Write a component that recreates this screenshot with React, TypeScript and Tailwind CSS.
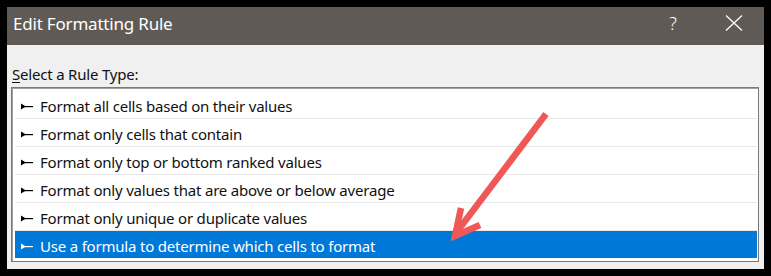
const rules = [
  "Format all cells based on their values",
  "Format only cells that contain",
  "Format only top or bottom ranked values",
  "Format only values that are above or below average",
  "Format only unique or duplicate values",
  "Use a formula to determine which cells to format",
];

const Bullet = ({ color }: { color: string }) => (
  <svg width="12" height="7" viewBox="0 0 12 7" className="shrink-0">
    <polygon points="0,0.5 0,6.5 5,3.5" fill={color} />
    <rect x="3" y="3" width="9" height="1.2" fill={color} />
  </svg>
);

export default function App() {
  const selected = 5;

  return (
    <div
      className="relative w-[771px] h-[276px] bg-black p-[7px]"
      style={{ fontFamily: '"Segoe UI", "Noto Sans", "Open Sans", sans-serif' }}
    >
      <div className="flex flex-col w-[757px] h-[262px] bg-[#f0f0f0]">
        {/* title bar */}
        <div className="flex items-center h-[38px] bg-[#5f5a56] text-white">
          <span className="ml-[6px] text-[17px] leading-none pb-[6px] tracking-[-0.2px]">Edit Formatting Rule</span>
          <span className="ml-auto mr-[48px] text-[18px] font-light leading-none pb-[6px]">?</span>
          <svg width="18" height="16" viewBox="0 0 18 16" className="mr-[21px] mb-[6px]">
            <path d="M1 0.5 L17 15.5 M17 0.5 L1 15.5" stroke="white" strokeWidth="1.3" />
          </svg>
        </div>

        <div className="pt-[19px] pl-[5px] text-[15px] leading-[20px] text-[#111] tracking-[-0.2px]">
          <span className="underline underline-offset-2">S</span>elect a Rule Type:
        </div>

        {/* rule list */}
        <div className="ml-[4px] mt-[3px] w-[748px] h-[175px] border border-[#7a7a7a] bg-white shadow-[inset_1px_1px_0_#a0a0a0] pl-[3px] pr-[1px] pt-[3px]">
          {rules.map((rule, i) => {
            const isSel = i === selected;
            return (
              <div
                key={rule}
                className={
                  isSel
                    ? "flex items-center h-[27px] bg-[#0078d7] text-white pl-[6px] pt-[3px]"
                    : "flex items-center h-[28px] border-b border-[#e8e8e8] text-[#111] pl-[6px] pt-[3px]"
                }
              >
                <Bullet color={isSel ? "#ffffff" : "#000000"} />
                <span className="ml-[7px] text-[15px] leading-none tracking-[-0.2px]">{rule}</span>
              </div>
            );
          })}
        </div>
      </div>

      {/* red annotation arrow */}
      <svg className="absolute inset-0 pointer-events-none" width="771" height="276">
        <g stroke="#f05757" strokeWidth="6.5" fill="none" strokeLinejoin="miter">
          <line x1="546" y1="114" x2="456" y2="233" />
          <polyline points="461,208 455,236 480,225" />
        </g>
      </svg>
    </div>
  );
}
